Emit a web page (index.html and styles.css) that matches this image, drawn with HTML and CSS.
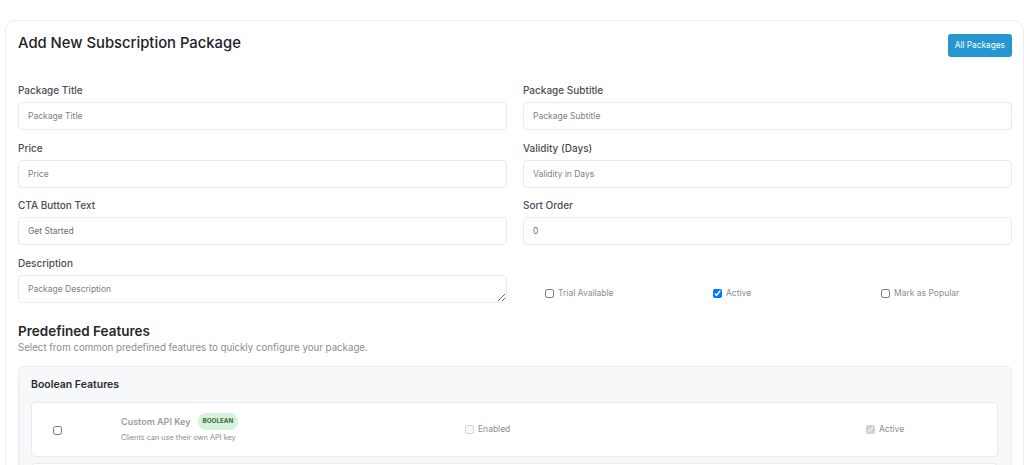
FILE: index.html
```html
<!DOCTYPE html>
<html lang="en">
<head>
    <meta charset="UTF-8">
    <meta name="viewport" content="width=device-width, initial-scale=1.0">
    <title>Add New Subscription Package</title>
    <link rel="stylesheet" href="styles.css">
</head>
<body>
    <div class="card">
        <div class="card-header">
            <h1 class="card-title">Add New Subscription Package</h1>
            <a class="btn-primary" href="#">All Packages</a>
        </div>

        <form class="package-form" action="#" method="post">
            <div class="form-grid">
                <div class="field">
                    <label>Package Title</label>
                    <input type="text" placeholder="Package Title">
                </div>
                <div class="field">
                    <label>Package Subtitle</label>
                    <input type="text" placeholder="Package Subtitle">
                </div>
                <div class="field">
                    <label>Price</label>
                    <input type="text" placeholder="Price">
                </div>
                <div class="field">
                    <label>Validity (Days)</label>
                    <input type="text" placeholder="Validity in Days">
                </div>
                <div class="field">
                    <label>CTA Button Text</label>
                    <input type="text" value="Get Started">
                </div>
                <div class="field">
                    <label>Sort Order</label>
                    <input type="text" value="0">
                </div>
                <div class="field">
                    <label>Description</label>
                    <textarea placeholder="Package Description"></textarea>
                </div>
                <div class="options">
                    <label class="check"><input type="checkbox"> Trial Available</label>
                    <label class="check"><input type="checkbox" checked> Active</label>
                    <label class="check"><input type="checkbox"> Mark as Popular</label>
                </div>
            </div>

            <!-- Fonctionnalités prédéfinies -->
            <h2 class="section-title">Predefined Features</h2>
            <p class="section-sub">Select from common predefined features to quickly configure your package.</p>

            <div class="feature-group">
                <h3 class="group-title">Boolean Features</h3>
                <div class="feature-row">
                    <div class="feature-select"><input type="checkbox"></div>
                    <div class="feature-info">
                        <div class="feature-name">Custom API Key <span class="badge">BOOLEAN</span></div>
                        <div class="feature-desc">Clients can use their own API key</div>
                    </div>
                    <label class="check muted"><input type="checkbox" disabled> Enabled</label>
                    <label class="check muted"><input type="checkbox" checked disabled> Active</label>
                </div>
                <div class="feature-row"></div>
            </div>
        </form>
    </div>
</body>
</html>
```

FILE: styles.css
```css
/* Styles généraux */
html, body {
    margin: 0;
    padding: 0;
    background: #fff;
    font-family: 'Inter', 'Noto Sans', sans-serif;
    color: #222;
}

body {
    padding: 20px 0 0 5px;
    overflow: hidden;
}

/* Carte principale */
.card {
    border: 1px solid #eceef2;
    border-radius: 10px;
    padding: 12px 11px 0 12px;
    background: #fff;
}

.card-header {
    display: flex;
    justify-content: space-between;
    align-items: flex-start;
    margin-bottom: 26px;
}

.card-title {
    margin: 0;
    font-size: 14.8px;
    line-height: 20px;
    font-weight: 500;
    color: #1f2127;
}

.btn-primary {
    margin-top: 1px;
    display: inline-block;
    background: #2596d2;
    color: #fff;
    font-size: 8.3px;
    line-height: 23px;
    padding: 0 7px;
    border-radius: 3px;
    text-decoration: none;
}

/* Formulaire */
.form-grid {
    display: grid;
    grid-template-columns: 1fr 1fr;
    column-gap: 16px;
    row-gap: 10.5px;
}

.field label {
    display: block;
    font-size: 10px;
    line-height: 14px;
    font-weight: 500;
    color: #4a4d55;
    margin-bottom: 5px;
}

.field input,
.field textarea {
    display: block;
    box-sizing: border-box;
    width: 100%;
    height: 28px;
    padding: 0 9px;
    border: 1px solid #e8eaee;
    border-radius: 4px;
    font-family: inherit;
    font-size: 8.5px;
    color: #6b6e75;
    background: #fff;
    outline: none;
}

.field textarea {
    padding-top: 8px;
    resize: vertical;
}

.field input::placeholder,
.field textarea::placeholder {
    color: #7d8087;
}

/* Cases à cocher */
.options {
    display: grid;
    grid-template-columns: 168px 168px 1fr;
    align-items: center;
    padding: 28px 0 0 22px;
}

.check {
    display: flex;
    align-items: center;
    gap: 4px;
    font-size: 8.5px;
    color: #8a8d93;
}

.check input {
    width: 9px;
    height: 9px;
    margin: 0;
}

/* Fonctionnalités prédéfinies */
.section-title {
    margin: 19px 0 0;
    font-size: 13.5px;
    line-height: 18px;
    font-weight: 600;
    color: #26282d;
}

.section-sub {
    margin: 1px 0 11px;
    font-size: 9.7px;
    line-height: 14px;
    color: #8a8d93;
}

.feature-group {
    background: #f7f8fa;
    border: 1px solid #eaecef;
    border-radius: 6px;
    padding: 11px 13px 12px 12px;
}

.group-title {
    margin: 0 0 10px;
    font-size: 10.5px;
    line-height: 14px;
    font-weight: 600;
    color: #2a2c31;
}

.feature-row {
    display: grid;
    grid-template-columns: 89px 344px 401px 1fr;
    align-items: center;
    height: 55px;
    box-sizing: border-box;
    padding-bottom: 3px;
    background: #fff;
    border: 1px solid #e8eaee;
    border-radius: 4px;
    margin-bottom: 6px;
}

.feature-select {
    padding-left: 21px;
    padding-top: 3px;
}

.feature-select input {
    width: 9px;
    height: 9px;
    margin: 0;
}

.feature-name {
    display: flex;
    align-items: center;
    gap: 7px;
    font-size: 9px;
    font-weight: 600;
    color: #9a9ca1;
}

.badge {
    background: #d7f2dc;
    color: #2e6b3c;
    font-size: 6.3px;
    font-weight: 700;
    line-height: 17px;
    padding: 0 5px;
    border-radius: 8px;
}

.feature-desc {
    margin-top: 3px;
    font-size: 7.3px;
    color: #8a8d93;
}

.check.muted {
    color: #8a8d93;
    padding-top: 3px;
}
```
